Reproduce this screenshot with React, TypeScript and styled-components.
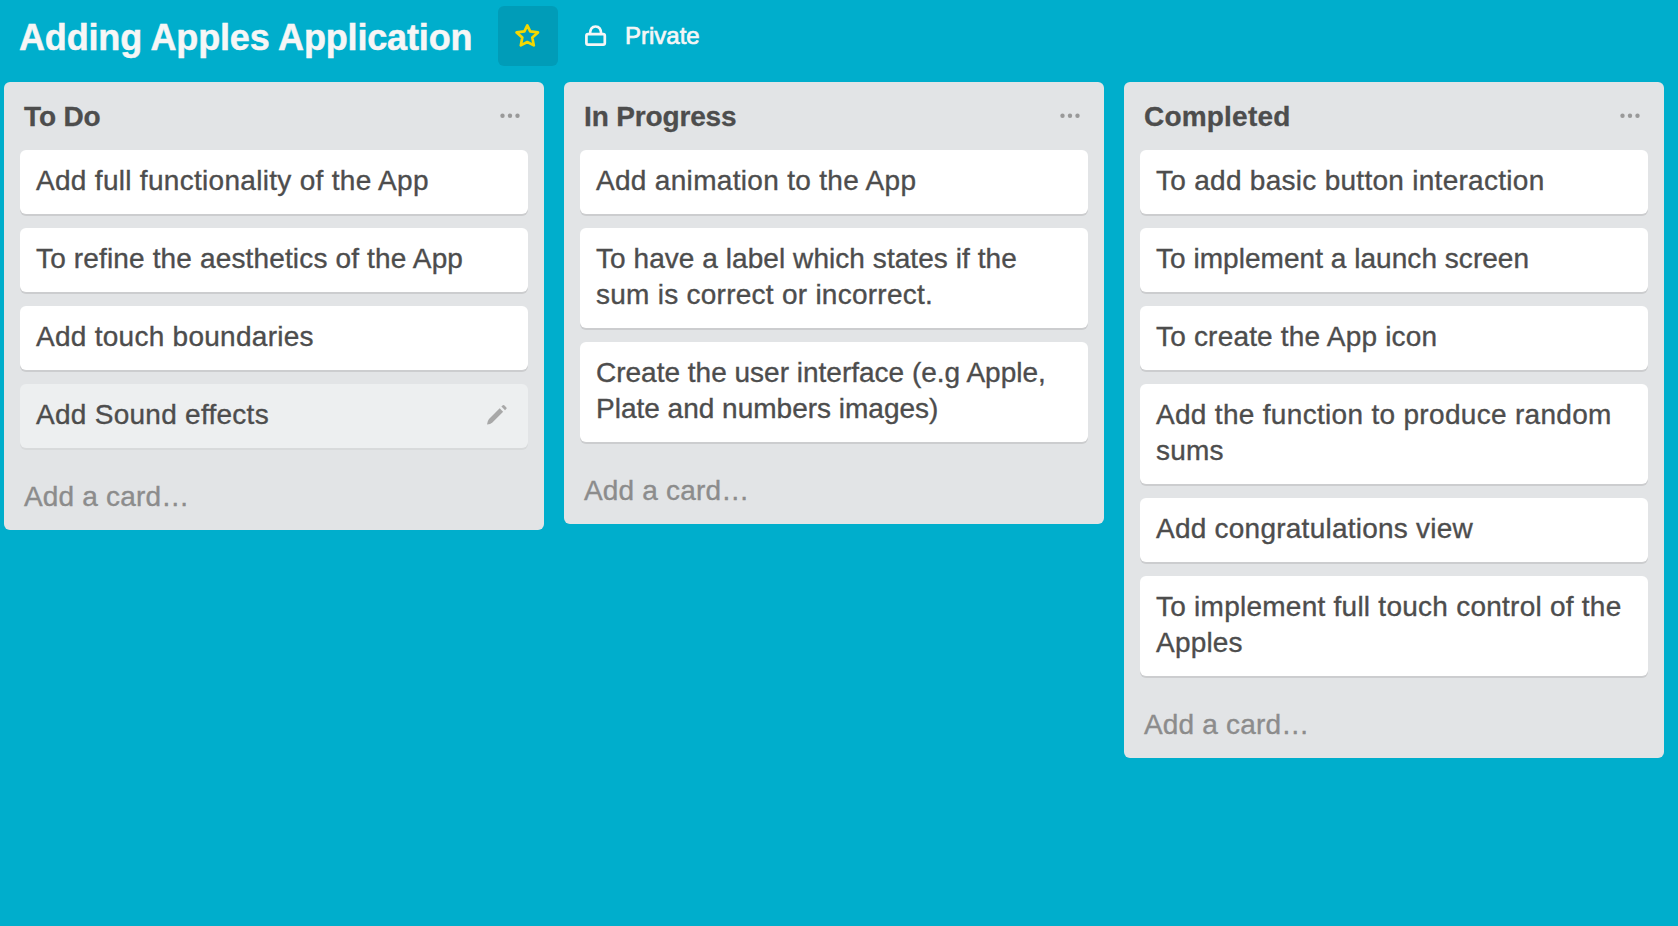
import React from "react";
import styled, { createGlobalStyle } from "styled-components";

const GlobalStyle = createGlobalStyle`
  * { box-sizing: border-box; }
  html, body { margin: 0; height: 100%; background: #00aecc; }
  body {
    font-family: "Liberation Sans", Arial, sans-serif;
    color: #4d4d4d;
    overflow: hidden;
  }
  button { font: inherit; border: 0; background: none; padding: 0; text-align: left; }
`;

const Board = styled.div`
  display: flex;
  flex-direction: column;
  height: 926px;
`;

const Header = styled.header`
  display: flex;
  align-items: center;
  height: 82px;
  padding: 0 20px 10px;
  color: #f6f6f6;
`;

const BoardTitle = styled.h1`
  margin: 4px 0 0 -1px;
  width: 479px;
  font-size: 36px;
  line-height: 44px;
  letter-spacing: -0.16px;
  -webkit-text-stroke: 0.5px #f6f6f6;
  white-space: nowrap;
`;

const StarButton = styled.button`
  display: flex;
  align-items: center;
  justify-content: center;
  width: 60px;
  height: 60px;
  border-radius: 6px;
  background: #009cb8;
`;

const Privacy = styled.div`
  display: flex;
  align-items: center;
  gap: 18px;
  margin-left: 27px;
  font-size: 24px;
  line-height: 30px;
  -webkit-text-stroke: 0.7px #f6f6f6;
  white-space: nowrap;
`;

const Lists = styled.main`
  display: flex;
  align-items: flex-start;
  gap: 20px;
  padding-left: 4px;
`;

const List = styled.section`
  flex: none;
  width: 540px;
  padding: 0 16px;
  border-radius: 6px;
  background: #e2e4e6;
`;

const ListHeader = styled.div`
  display: flex;
  justify-content: space-between;
  height: 68px;
  padding: 16px 8px 0 4px;
`;

const ListTitle = styled.h2<{ $spacing: number }>`
  margin: 0;
  padding-top: 1px;
  font-size: 28px;
  line-height: 36px;
  letter-spacing: ${(p) => p.$spacing}px;
  -webkit-text-stroke: 0.3px #4d4d4d;
  white-space: nowrap;
`;

const MenuButton = styled.button`
  display: flex;
  width: 20px;
  height: 36px;
  align-items: center;
`;

const Cards = styled.div`
  display: flex;
  flex-direction: column;
  gap: 14px;
`;

const CardBox = styled.article<{ $active?: boolean }>`
  display: flex;
  justify-content: space-between;
  padding: 13px 20px 15px 16px;
  border-radius: 6px;
  background: ${(p) => (p.$active ? "#edeff0" : "#fff")};
  box-shadow: 0 2px 0 ${(p) => (p.$active ? "#d8dadb" : "#cccdcf")};
`;

const Line = styled.div<{ $spacing: number }>`
  font-size: 28px;
  line-height: 36px;
  letter-spacing: ${(p) => p.$spacing}px;
  -webkit-text-stroke: 0.35px #4d4d4d;
  white-space: nowrap;
`;

const EditButton = styled.button`
  display: flex;
  height: 21px;
  margin-top: 7px;
`;

const AddCard = styled.button`
  display: flex;
  align-items: flex-start;
  height: 82px;
  padding: 31px 0 0 4px;
  color: #8c8c8c;
  font-size: 28px;
  line-height: 36px;
  letter-spacing: 0.18px;
  -webkit-text-stroke: 0.35px #8c8c8c;
  white-space: nowrap;
`;

type TextLine = [text: string, spacing: number];
type Card = { lines: TextLine[]; active?: boolean };
type ListData = { title: TextLine; cards: Card[] };

const lists: ListData[] = [
  {
    title: ["To Do", -0.15],
    cards: [
      { lines: [["Add full functionality of the App", 0.3]] },
      { lines: [["To refine the aesthetics of the App", 0.15]] },
      { lines: [["Add touch boundaries", 0.27]] },
      { lines: [["Add Sound effects", 0.27]], active: true },
    ],
  },
  {
    title: ["In Progress", -0.15],
    cards: [
      { lines: [["Add animation to the App", 0.31]] },
      { lines: [["To have a label which states if the", 0.06], ["sum is correct or incorrect.", 0.26]] },
      { lines: [["Create the user interface (e.g Apple,", 0], ["Plate and numbers images)", 0]] },
    ],
  },
  {
    title: ["Completed", 0.2],
    cards: [
      { lines: [["To add basic button interaction", 0.28]] },
      { lines: [["To implement a launch screen", 0.04]] },
      { lines: [["To create the App icon", 0.19]] },
      { lines: [["Add the function to produce random", 0.31], ["sums", 0.2]] },
      { lines: [["Add congratulations view", 0.24]] },
      { lines: [["To implement full touch control of the", 0.25], ["Apples", 0.2]] },
    ],
  },
];

const StarIcon = () => (
  <svg width="26" height="26" viewBox="0 0 26 26" fill="none" stroke="#f5d800" strokeWidth="2.7" strokeLinejoin="round">
    <path d="M12.3 2.4 15.2 8.4 23 9.4 17.3 14.6 18.8 22.4 12.3 19 5.8 22.4 7.3 14.6 1.6 9.4 9.4 8.4Z" />
  </svg>
);

const LockIcon = () => (
  <svg width="22" height="22" viewBox="0 0 22 22" fill="none" stroke="#f6f6f6" strokeWidth="2.7">
    <rect x="1.4" y="9.2" width="18.4" height="10.5" rx="1.6" />
    <path d="M5 9C5.1 4.6 7.1 1.5 10.6 1.5S16.1 4.6 16.2 9" />
  </svg>
);

const DotsIcon = () => (
  <svg width="20" height="6" viewBox="0 0 20 6" fill="#999">
    <circle cx="2.5" cy="2.7" r="2.2" />
    <circle cx="10" cy="2.7" r="2.2" />
    <circle cx="17.5" cy="2.7" r="2.2" />
  </svg>
);

const PencilIcon = () => (
  <svg width="21" height="21" viewBox="0 0 21 21" fill="#a8a8a8">
    <path d="M0 20.6Q.2 17.2 2 15L12.7 4.3 16.1 7.7 5.4 18.4Q3.4 20.2 0 20.6Z" />
    <path d="M14.4 2.6 15.8 1.2Q16.5.6 17.2 1.2L19.4 3.4Q20 4.1 19.4 4.8L18 6.2Z" />
  </svg>
);

export default function App() {
  return (
    <>
      <GlobalStyle />
      <Board>
        <Header>
          <BoardTitle>Adding Apples Application</BoardTitle>
          <StarButton aria-label="Star board"><StarIcon /></StarButton>
          <Privacy><LockIcon /><span>Private</span></Privacy>
        </Header>
        <Lists>
          {lists.map((list) => (
            <List key={list.title[0]}>
              <ListHeader>
                <ListTitle $spacing={list.title[1]}>{list.title[0]}</ListTitle>
                <MenuButton aria-label="List menu"><DotsIcon /></MenuButton>
              </ListHeader>
              <Cards>
                {list.cards.map((card) => (
                  <CardBox key={card.lines[0][0]} $active={card.active}>
                    <div>
                      {card.lines.map(([text, spacing]) => (
                        <Line key={text} $spacing={spacing}>{text}</Line>
                      ))}
                    </div>
                    {card.active && <EditButton aria-label="Edit card"><PencilIcon /></EditButton>}
                  </CardBox>
                ))}
              </Cards>
              <AddCard>Add a card…</AddCard>
            </List>
          ))}
        </Lists>
      </Board>
    </>
  );
}
